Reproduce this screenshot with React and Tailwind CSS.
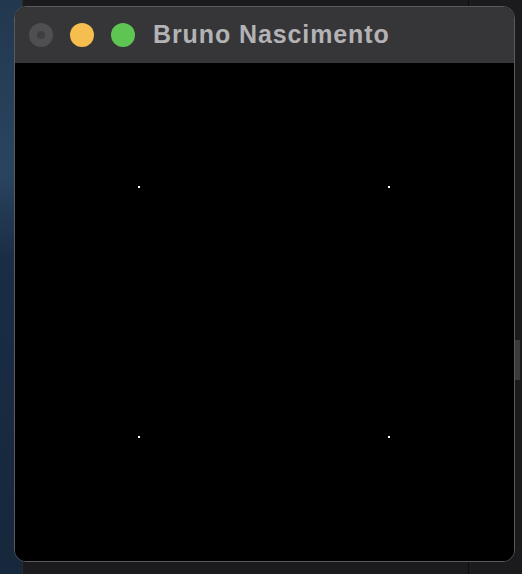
export default function App() {
  return (
    <div className="relative h-[574px] w-[522px] overflow-hidden bg-[#1b1b1d] font-['Liberation_Sans',sans-serif]">
      {/* desktop bits behind the window */}
      <div className="absolute left-0 top-0 h-full w-[22px] bg-[linear-gradient(180deg,#22384f_0%,#2a4460_30%,#1a2d45_45%,#17273c_100%)]" />
      <div className="absolute left-[22px] top-0 h-full w-px bg-[#2a2a2c]" />
      <div className="absolute left-[468px] top-0 h-full w-px bg-[#0d0d0d]" />
      <div className="absolute right-[2px] top-[340px] h-[40px] w-[6px] bg-[#3b3b3d]" />

      <div className="relative pl-[14px] pt-[6px]">
        <div className="flex h-[556px] w-[501px] flex-col overflow-hidden rounded-[12px] border border-[#5a5a5c] bg-black">
          <div className="flex h-[56px] shrink-0 items-center gap-[17px] bg-[#363638] pl-[14px]">
            <div className="flex h-[24px] w-[24px] items-center justify-center rounded-full bg-[#4f4f51]">
              <div className="h-[8px] w-[8px] rounded-full bg-[#3e3e40]" />
            </div>
            <div className="h-[24px] w-[24px] rounded-full bg-[#f6bd4f]" />
            <div className="h-[24px] w-[24px] rounded-full bg-[#5ec553]" />
            <div className="-mt-[2px] ml-[1px] text-[25px] font-bold leading-none tracking-[0.9px] text-[#b3b3b5]">
              Bruno Nascimento
            </div>
          </div>
          <div className="flex-1 bg-black pl-[123px] pt-[123px]">
            <div className="grid w-[252px] grid-cols-[2px_2px] justify-between gap-y-[248px]">
              <div className="h-[2px] w-[2px] bg-white" />
              <div className="h-[2px] w-[2px] bg-white" />
              <div className="h-[2px] w-[2px] bg-white" />
              <div className="h-[2px] w-[2px] bg-white" />
            </div>
          </div>
        </div>
      </div>
    </div>
  )
}
